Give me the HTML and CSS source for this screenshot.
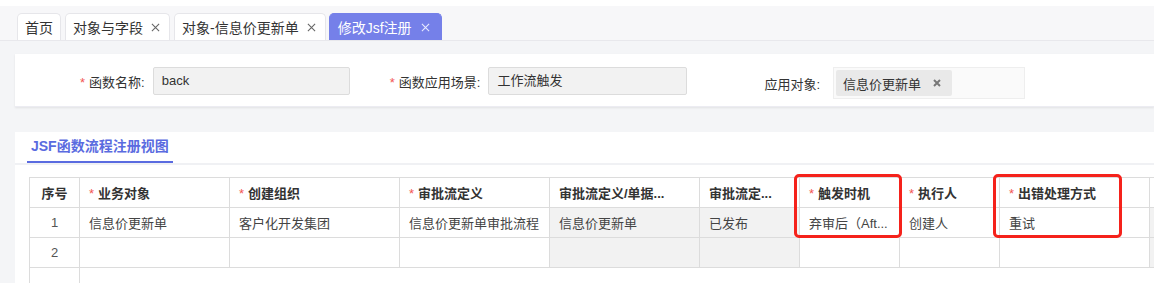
FILE: index.html
```html
<!DOCTYPE html>
<html lang="zh-CN">
<head>
  <meta charset="UTF-8">
  <title>修改Jsf注册</title>
  <link rel="stylesheet" href="styles.css">
</head>
<body>

  <div class="topbar"></div>

  <!-- 页签 -->
  <div class="tabbar">
    <div class="tab">首页</div>
    <div class="tab closable">对象与字段<svg class="close" viewBox="0 0 10 10"><path d="M1 1L9 9M9 1L1 9"/></svg></div>
    <div class="tab closable">对象-信息价更新单<svg class="close" viewBox="0 0 10 10"><path d="M1 1L9 9M9 1L1 9"/></svg></div>
    <div class="tab closable active">修改Jsf注册<svg class="close" viewBox="0 0 10 10"><path d="M1 1L9 9M9 1L1 9"/></svg></div>
  </div>

  <!-- 基本信息 -->
  <div class="panel form-panel">
    <div class="field">
      <label><span class="req">*</span>函数名称:</label>
      <div class="input name-input">back</div>
    </div>
    <div class="field">
      <label><span class="req">*</span>函数应用场景:</label>
      <div class="input scene-input">工作流触发</div>
    </div>
    <div class="field target-field">
      <label>应用对象:</label>
      <div class="multi">
        <span class="tag">信息价更新单<svg class="tag-x" viewBox="0 0 10 10"><path d="M2 2L8 8M8 2L2 8"/></svg></span>
      </div>
    </div>
  </div>

  <!-- 流程注册视图 -->
  <div class="panel grid-panel">
    <div class="view-head">
      <div class="view-title">JSF函数流程注册视图</div>
    </div>

    <div class="table-wrap">
      <table class="grid">
        <colgroup>
          <col style="width:50px">
          <col style="width:150px">
          <col style="width:170px">
          <col style="width:150px">
          <col style="width:150px">
          <col style="width:100px">
          <col style="width:100px">
          <col style="width:100px">
          <col style="width:150px">
          <col style="width:120px">
        </colgroup>
        <thead>
          <tr>
            <th class="num">序号</th>
            <th><span class="req">*</span>业务对象</th>
            <th><span class="req">*</span>创建组织</th>
            <th><span class="req">*</span>审批流定义</th>
            <th>审批流定义/单据...</th>
            <th>审批流定...</th>
            <th><span class="req">*</span>触发时机</th>
            <th><span class="req">*</span>执行人</th>
            <th><span class="req">*</span>出错处理方式</th>
            <th></th>
          </tr>
        </thead>
        <tbody>
          <tr>
            <td class="num">1</td>
            <td>信息价更新单</td>
            <td>客户化开发集团</td>
            <td>信息价更新单审批流程</td>
            <td class="ro">信息价更新单</td>
            <td class="ro">已发布</td>
            <td>弃审后（Aft...</td>
            <td>创建人</td>
            <td>重试</td>
            <td class="ro"></td>
          </tr>
          <tr>
            <td class="num">2</td>
            <td></td>
            <td></td>
            <td></td>
            <td class="ro"></td>
            <td class="ro"></td>
            <td></td>
            <td></td>
            <td></td>
            <td class="ro"></td>
          </tr>
          <tr class="last">
            <td class="num"></td>
            <td colspan="9"></td>
          </tr>
        </tbody>
      </table>

      <!-- 标注框 -->
      <div class="mark mark-trigger"></div>
      <div class="mark mark-error"></div>
    </div>
  </div>

</body>
</html>
```

FILE: styles.css
```css
body {
  margin: 0;
  background: #f4f5f7;
  font-family: "Liberation Sans", "Noto Sans CJK SC", sans-serif;
  color: #333;
  overflow: hidden;
}

.topbar {
  height: 6px;
  background: #fff;
}

.tabbar {
  display: flex;
  align-items: flex-end;
  gap: 4px;
  height: 34px;
  padding-left: 17px;
  background: #f7f7f9;
  border-bottom: 1px solid #e8e8ec;
}
.tab {
  display: flex;
  align-items: center;
  height: 26px;
  padding: 0 7px;
  font-size: 14px;
  color: #333;
  background: #fff;
  border: 1px solid #e6e6ea;
  border-bottom: none;
  border-radius: 5px 5px 0 0;
  white-space: nowrap;
}
.tab.closable {
  padding-right: 9px;
}
.tab .close {
  width: 9px;
  height: 9px;
  margin-left: 8px;
  stroke: #666;
  stroke-width: 1.2;
  fill: none;
}
.tab.active {
  background: #7580e9;
  border-color: #7580e9;
  color: #fff;
  margin-left: -1px;
  padding-right: 11px;
  padding-left: 8px;
}
.tab.active .close {
  stroke: #e8eaff;
  margin-left: 9px;
}

.panel {
  background: #fff;
  margin-left: 15px;
}

.form-panel {
  display: flex;
  align-items: flex-start;
  height: 53px;
  margin-top: 13px;
  padding-left: 65px;
  box-sizing: border-box;
  padding-top: 13px;
  box-shadow: 0 1px 2px rgba(0, 0, 0, 0.08);
  border-bottom: 1px solid #ececf2;
}
.field {
  display: flex;
  align-items: center;
  margin-right: 40px;
}
.field label {
  font-size: 13px;
  color: #333;
  margin-right: 8px;
  white-space: nowrap;
}
.req {
  color: #f25555;
  margin-right: 4px;
  font-weight: normal;
}
.input {
  height: 26px;
  line-height: 26px;
  padding: 0 8px;
  background: #f2f2f2;
  border: 1px solid #dcdcdc;
  border-radius: 2px;
  font-size: 13px;
  color: #333;
}
.name-input {
  width: 179px;
}
.scene-input {
  width: 181px;
}
.target-field {
  margin-left: 37px;
}
.target-field label {
  margin-right: 13px;
}
.multi {
  width: 188px;
  height: 30px;
  display: flex;
  align-items: center;
  padding-left: 2px;
  background: #fafafa;
  border: 1px solid #eeeeee;
}
.tag {
  display: inline-flex;
  align-items: center;
  height: 26px;
  padding: 0 10px 0 7px;
  background: #e9e9e9;
  border-radius: 2px;
  font-size: 13px;
  color: #333;
}
.tag-x {
  width: 10px;
  height: 10px;
  margin-left: 11px;
  stroke: #777;
  stroke-width: 2;
  fill: none;
}

.grid-panel {
  margin-top: 25px;
  height: 151px;
  overflow: hidden;
}
.view-head {
  height: 31px;
  border-bottom: 2px solid #f0f1f4;
  padding-left: 12px;
}
.view-title {
  display: inline-block;
  height: 29px;
  line-height: 29px;
  padding: 0 4px;
  font-size: 14px;
  font-weight: bold;
  color: #5a6be0;
  border-bottom: 2px solid #5a6be0;
}

.table-wrap {
  position: relative;
  margin: 12px 0 0 14px;
}
.grid {
  border-collapse: collapse;
  table-layout: fixed;
  width: 1240px;
  font-size: 13px;
}
.grid th,
.grid td {
  height: 29px;
  padding: 0 9px;
  border: 1px solid #dcdcdc;
  text-align: left;
  white-space: nowrap;
  overflow: hidden;
  color: #333;
}
.grid th {
  font-weight: bold;
  background: #fff;
}
.grid td {
  color: #444;
}
.grid .num {
  text-align: center;
  padding: 0;
}
.grid td.num {
  color: #555;
}
.grid td.ro {
  background: #f2f2f2;
}
.grid tr.last td {
  height: 40px;
}

.mark {
  position: absolute;
  top: -3px;
  height: 58px;
  border: 3px solid #f5221b;
  border-radius: 5px;
}
.mark-trigger {
  left: 765px;
  width: 102px;
}
.mark-error {
  left: 964px;
  width: 123px;
}
```
